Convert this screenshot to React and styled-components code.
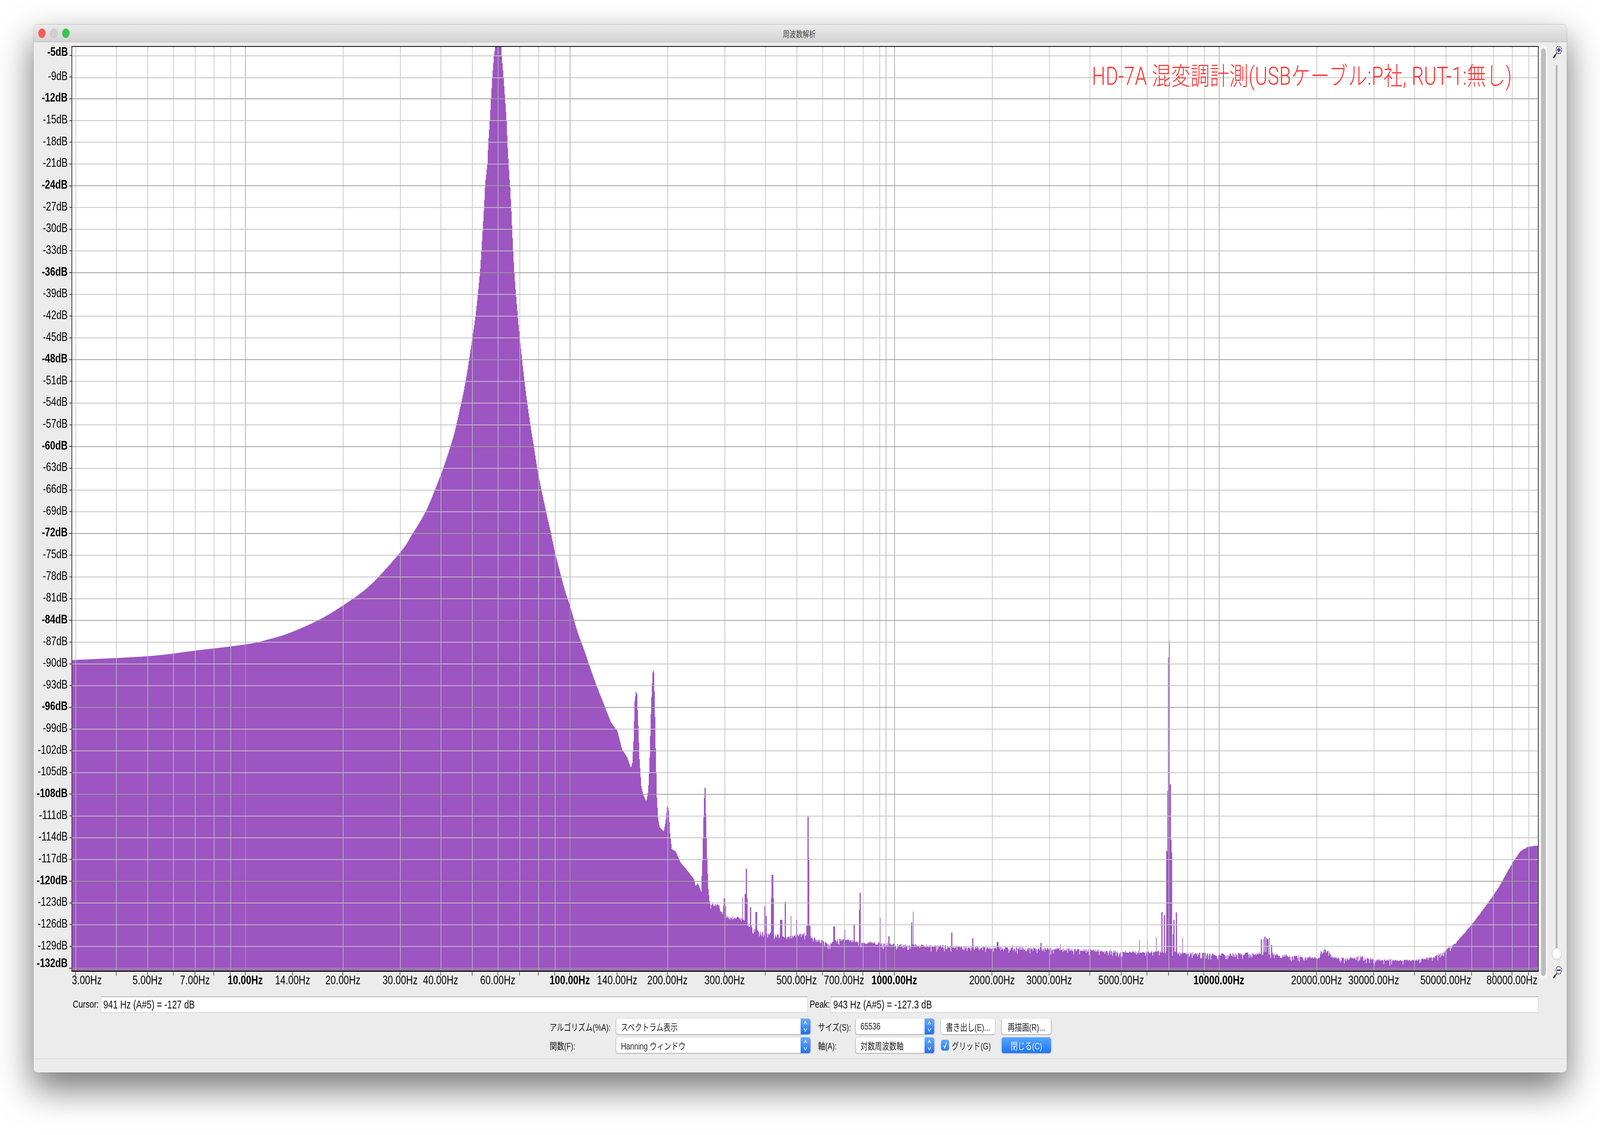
import React from "react";
import styled, { createGlobalStyle } from "styled-components";

const SANS = `"Liberation Sans", "Noto Sans CJK JP", sans-serif`;
const PAGE_WIDTH = 5344;

const GlobalStyle = createGlobalStyle`
  html, body {
    margin: 0;
    background: #fff;
    font-family: ${SANS};
  }
  body {
    height: 2906px;
    overflow: hidden;
  }
`;

// the layout below is in 5344px page pixels. the browser that runs this may hand out a
// narrower window (4096px was seen), so squeeze the width to keep the whole window in frame
const fitX = () => Math.min(1, window.innerWidth / PAGE_WIDTH);

// chart helpers, all values are page pixels
const PLOT_LEFT = 239;
const freqX = (f) => 819 + 1084 * Math.log10(f / 10);
const rowY = (i) => (i === 0 ? 143 : i === 1 ? 199 : 253 + (i - 2) * 55.65);

const dbLabels = ["-5dB"];
for (let db = -9; db >= -132; db -= 3) dbLabels.push(`${db}dB`);

const gridFreqs = [];
[1, 10, 100, 1000, 10000].forEach((decade) => {
  for (let n = decade === 1 ? 3 : 1; n <= 9; n++) gridFreqs.push(n * decade);
});

const freqLabels = [
  3, 5, 7, 10, 14, 20, 30, 40, 60, 100, 140, 200, 300, 500, 700, 1000, 2000, 3000,
  5000, 10000, 20000, 30000, 50000, 80000,
];
const isDecade = (f) => [10, 100, 1000, 10000].includes(f);

// catmull-rom through the measured points, the skirts of the peak are smooth in the reference
const smooth = (pts) => {
  const out = [];
  for (let i = 0; i < pts.length - 1; i++) {
    const p0 = pts[Math.max(i - 1, 0)];
    const p1 = pts[i];
    const p2 = pts[i + 1];
    const p3 = pts[Math.min(i + 2, pts.length - 1)];
    for (let s = 0; s < 8; s++) {
      const t = s / 8;
      const at = (k) =>
        0.5 *
        (2 * p1[k] +
          (p2[k] - p0[k]) * t +
          (2 * p0[k] - 5 * p1[k] + 4 * p2[k] - p3[k]) * t * t +
          (3 * p1[k] - p0[k] - 3 * p2[k] + p3[k]) * t * t * t);
      out.push([at(0), at(1)]);
    }
  }
  out.push(pts[pts.length - 1]);
  return out;
};

const leftSkirt = smooth([
  [240, 1690], [494, 1680], [648, 1666], [818, 1650], [900, 1636], [967, 1620], [1061, 1588],
  [1144, 1550], [1235, 1498], [1335, 1414], [1375, 1368], [1422, 1306], [1469, 1218], [1503, 1142],
  [1523, 1085], [1553, 977], [1576, 863], [1586, 809], [1594, 755], [1601, 698], [1606, 641],
  [1611, 579], [1615, 526], [1618, 480],
]);

const rightSkirt = smooth([
  [1702, 480], [1706, 541], [1710, 610], [1716, 698], [1724, 778], [1734, 863], [1750, 977],
  [1769, 1085], [1781, 1142], [1797, 1218], [1821, 1306], [1838, 1364], [1854, 1421], [1884, 1509],
  [1902, 1551], [1925, 1613], [1950, 1666], [1964, 1698], [1989, 1752], [2014, 1801], [2039, 1850],
]);

const envelope = [
  ...leftSkirt,
  [1620, 460], [1626, 421], [1629, 365], [1634, 309], [1638, 253], [1642, 199], [1648, 143],
  [1652, 119], [1672, 119], [1674, 143], [1680, 199], [1685, 253], [1690, 309], [1693, 365],
  [1697, 421], [1700, 460],
  ...rightSkirt,
  [2060, 1871], [2076, 1919], [2093, 1939],
  [2105, 1966], [2110, 1953], [2114, 1898], [2118, 1795], [2122, 1770], [2126, 1778], [2130, 1858],
  [2134, 1944], [2140, 2013], [2147, 2036], [2157, 2052], [2163, 2025], [2167, 1967], [2173, 1801],
  [2177, 1732], [2179, 1712], [2182, 1721], [2185, 1795], [2188, 1916], [2192, 2042], [2196, 2094],
  [2201, 2117], [2215, 2129], [2221, 2105], [2227, 2058], [2232, 2076], [2236, 2134], [2242, 2174],
  [2255, 2180], [2271, 2208], [2296, 2231], [2317, 2252], [2321, 2269], [2329, 2261], [2340, 2283],
  [2344, 2203], [2347, 2117], [2351, 2019], [2354, 2016], [2357, 2117], [2360, 2197], [2364, 2277],
  [2369, 2315], [2400, 2318], [2405, 2335], [2433, 2349], [2474, 2352], [2499, 2369], [2537, 2389],
  [2586, 2392], [2628, 2402], [2682, 2392], [2719, 2404], [2769, 2418], [2800, 2406], [2877, 2413],
  [3005, 2420], [3133, 2423], [3324, 2427], [3515, 2430], [3750, 2437], [3880, 2438], [3930, 2440],
  [4070, 2444], [4230, 2441], [4320, 2449], [4405, 2452], [4412, 2430], [4423, 2432], [4432, 2435],
  [4445, 2450], [4500, 2455], [4548, 2450], [4592, 2458], [4722, 2459], [4790, 2450], [4827, 2432],
  [4860, 2415], [4912, 2369], [4968, 2312], [5004, 2272], [5048, 2211], [5075, 2180], [5100, 2168],
  [5137, 2165],
];

const spikes = [
  [2418, 2300, 2], [2418, 2320, 5], [2478, 2297, 1], [2487, 2289, 1], [2491, 2224, 2], [2491, 2300, 4],
  [2505, 2323, 2], [2524, 2335, 3], [2553, 2320, 1], [2556, 2345, 3], [2578, 2240, 2], [2578, 2300, 4],
  [2607, 2355, 3], [2621, 2309, 1], [2640, 2345, 1], [2659, 2355, 1], [2697, 2091, 1], [2700, 2197, 1],
  [2698, 2330, 3], [2698, 2370, 6], [2784, 2372, 2], [2820, 2380, 1], [2851, 2368, 1], [2869, 2330, 1],
  [2871, 2286, 1], [2938, 2350, 1], [2967, 2397, 2], [3043, 2362, 1], [3048, 2334, 1], [3177, 2388, 1],
  [3247, 2402, 1], [3330, 2412, 3], [3380, 2420, 1], [3475, 2414, 1], [3540, 2417, 1], [3879, 2335, 1],
  [3887, 2343, 1], [3895, 2179, 1], [3898, 2025, 1], [3901, 1683, 1], [3904, 1641, 1], [3907, 2008, 1],
  [3909, 2151, 1], [3912, 2183, 1], [3917, 2392, 1], [3919, 2355, 1], [3927, 2336, 1], [3948, 2401, 1],
  [3804, 2407, 1], [3830, 2405, 1], [3860, 2400, 1], [4211, 2405, 1], [4218, 2404, 1], [4223, 2398, 1],
  [4229, 2402, 1], [4233, 2405, 1], [4238, 2401, 1], [4245, 2420, 1],
];

const buildSpectrum = () => {
  let seed = 4711;
  const rand = () => {
    seed = (seed * 16807) % 2147483647;
    return seed / 2147483647;
  };
  let seg = 0;
  let d = "M240,2488";
  for (let x = 240; x <= 5138; x += 2) {
    while (seg < envelope.length - 2 && envelope[seg + 1][0] < x) seg++;
    const [x0, y0] = envelope[seg];
    const [x1, y1] = envelope[seg + 1];
    let y = y0 + ((y1 - y0) * (x - x0)) / Math.max(x1 - x0, 0.01);
    if (x > 2370) {
      const amp = x < 4600 ? 4 : x < 4850 ? 2.5 : 1;
      const r = rand();
      y += r < 0.16 && x < 4850 ? 5 + rand() * 9 : (rand() - 0.5) * amp * 2;
    }
    spikes.forEach(([sx, sy, hw]) => {
      if (Math.abs(x - sx) <= hw) y = Math.min(y, sy);
    });
    d += `H${x}V${y.toFixed(1)}`;
  }
  return `${d}H5138V2488Z`;
};
const spectrumPath = buildSpectrum();

const Page = styled.div`
  width: ${PAGE_WIDTH}px;
  height: 2906px;
  box-sizing: border-box;
  padding: 63px 0 0 112px;
  transform-origin: 0 0;
`;

const Window = styled.div`
  width: 5121px;
  height: 2683px;
  display: flex;
  flex-direction: column;
  background: #ececec;
  border-radius: 12px;
  overflow: hidden;
  box-shadow: 0 0 0 1px rgba(0, 0, 0, 0.2), 0 40px 100px 4px rgba(0, 0, 0, 0.52);
`;

const TitleBar = styled.div`
  height: 45px;
  flex: none;
  box-sizing: border-box;
  display: grid;
  grid-template-columns: 1fr auto 1fr;
  align-items: center;
  padding: 0 0 0 16px;
  background: linear-gradient(#ebebeb, #d3d3d3);
  border-bottom: 1px solid #b6b6b6;
`;

const Lights = styled.div`
  display: flex;
  gap: 16px;
`;

const Light = styled.div`
  width: 24px;
  height: 24px;
  box-sizing: border-box;
  border-radius: 50%;
  background: ${(p) => p.$color};
  border: 1px solid ${(p) => p.$edge};
`;

const Title = styled.div`
  font-size: 22px;
  color: #4a4a4a;
  margin-right: 22px;
`;

const MainRow = styled.div`
  height: 2380px;
  flex: none;
  display: grid;
  grid-template-columns: 127px 4900px 26px 65px;
`;

const YAxis = styled.div`
  padding-top: 5.9px;
`;

const YRow = styled.div`
  height: 55.65px;
  display: flex;
  justify-content: flex-end;
  align-items: center;
`;

const YLabel = styled.span`
  font-size: 31px;
  line-height: 1;
  color: #000;
  font-weight: ${(p) => (p.$bold ? 700 : 400)};
  margin-right: ${(p) => (p.$bold ? 5 : 6)}px;
  transform: translateY(${(p) => p.$shift}px);
`;

const YTick = styled.span`
  width: ${(p) => (p.$bold ? 8 : 7)}px;
  height: 2px;
  background: #333;
`;

const Plot = styled.div`
  position: relative;
  margin-top: 10px;
  height: 2370px;
  box-sizing: border-box;
  border: 2px solid #000;
  border-bottom-width: 3px;
  background: #fff;
  overflow: hidden;
`;

const PlotSvg = styled.svg`
  display: block;
  width: 4896px;
  height: 2365px;
`;

const Caption = styled.div`
  position: absolute;
  left: 3406px;
  top: 36px;
  font-family: Roboto, "Noto Sans CJK JP", sans-serif;
  font-weight: 300;
  font-size: 64px;
  letter-spacing: 0.6px;
  line-height: 80px;
  color: #ff3333;
  white-space: nowrap;
`;

const ScrollTrack = styled.div`
  margin: 10px 0 1px 3px;
  width: 26px;
  box-sizing: border-box;
  padding: 6px 5px;
  background: #f6f6f6;
  display: flex;
`;

const ScrollThumb = styled.div`
  flex: 1;
  border-radius: 8px;
  background: #bdbdbd;
`;

const ZoomColumn = styled.div`
  padding: 10px 0 0 3px;
  display: flex;
  flex-direction: column;
  align-items: center;
`;

const ZoomGlyph = styled.svg`
  width: 32px;
  height: 32px;
  flex: none;
  margin-left: 6px;
`;

const SliderTrack = styled.div`
  flex: 1;
  width: 6px;
  margin-top: 16px;
  border-radius: 3px 3px 0 0;
  background: #b6b6b6;
`;

const SliderKnob = styled.div`
  width: 31px;
  height: 30px;
  flex: none;
  margin: -3px 0 17px;
  box-sizing: border-box;
  border-radius: 50%;
  background: #fff;
  border: 1px solid #c4c4c4;
  box-shadow: 0 1px 1px rgba(0, 0, 0, 0.15);
`;

const XAxis = styled.div`
  position: relative;
  flex: none;
  margin-left: 127px;
  width: 4900px;
  height: 63px;
`;

const XTick = styled.span`
  position: absolute;
  top: 1px;
  width: 2px;
  height: 9px;
  background: #444;
`;

const XLabel = styled.span`
  position: absolute;
  top: 6px;
  font-size: 31.5px;
  line-height: 1;
  white-space: nowrap;
  color: #000;
  font-weight: ${(p) => (p.$bold ? 700 : 400)};
  transform: translateX(-50%);
`;

const StatusRow = styled.div`
  flex: none;
  height: 41px;
  padding-left: 131px;
  display: grid;
  grid-template-columns: 94px 2360px 78px 2363px;
  align-items: stretch;
`;

const StatusLabel = styled.label`
  font-size: 26.5px;
  line-height: 41px;
  color: #000;
`;

const StatusField = styled.div`
  box-sizing: border-box;
  padding-left: 7px;
  background: #fff;
  border: 1px solid #c2c2c2;
  border-top: 2px solid #b4b4b4;
  font-size: 29px;
  line-height: 39px;
  color: #111;
`;

const Controls = styled.div`
  flex: none;
  margin-top: 16px;
  padding-left: 1724px;
  display: flex;
  flex-direction: column;
  gap: 8px;
`;

const ControlRow = styled.div`
  height: 40px;
  display: flex;
  align-items: center;
`;

const ControlLabel = styled.span`
  width: ${(p) => p.$width}px;
  margin-left: ${(p) => p.$gap || 0}px;
  flex: none;
  font-size: 24px;
  color: #111;
  white-space: nowrap;
`;

const Select = styled.div`
  width: ${(p) => p.$width}px;
  height: 40px;
  flex: none;
  box-sizing: border-box;
  display: flex;
  align-items: center;
  justify-content: space-between;
  padding-left: 16px;
  background: #fff;
  border-radius: 6px;
  font-size: 24px;
  color: #222;
  box-shadow: 0 1px 3px rgba(0, 0, 0, 0.45), 0 0 0 1px rgba(0, 0, 0, 0.04);
`;

const Stepper = styled.div`
  width: 32px;
  height: 100%;
  flex: none;
  display: flex;
  align-items: center;
  justify-content: center;
  border-radius: 0 6px 6px 0;
  background: linear-gradient(#66adfb, #1f6ff1);
`;

const PushButton = styled.div`
  width: ${(p) => p.$width}px;
  height: 40px;
  margin-left: ${(p) => p.$gap}px;
  flex: none;
  display: flex;
  align-items: center;
  justify-content: center;
  border-radius: 6px;
  font-size: 24px;
  white-space: nowrap;
  color: ${(p) => (p.$primary ? "#e6f0ff" : "#222")};
  background: ${(p) => (p.$primary ? "linear-gradient(#56a5fb, #1d76f4)" : "#fff")};
  box-shadow: 0 1px 3px rgba(0, 0, 0, 0.45);
`;

const CheckField = styled.div`
  width: 180px;
  margin-left: 23px;
  flex: none;
  display: flex;
  align-items: center;
  gap: 9px;
  font-size: 24px;
  color: #222;
  white-space: nowrap;
`;

const CheckBox = styled.div`
  width: 27px;
  height: 28px;
  flex: none;
  display: flex;
  align-items: center;
  justify-content: center;
  border-radius: 6px;
  background: linear-gradient(#62aafb, #2a7df3);
`;

const Footer = styled.div`
  margin-top: auto;
  height: 35px;
  flex: none;
  box-sizing: border-box;
  border-top: 1px solid #c9c9c9;
  box-shadow: inset 0 1px 0 #f8f8f8;
`;

const StepperIcon = () => (
  <svg width="14" height="32" viewBox="0 0 14 32" fill="none" stroke="#fff" strokeWidth="2">
    <path d="M2.5 11 7 3.5 11.5 11M2.5 21 7 28.5 11.5 21" />
  </svg>
);

const ZoomIcon = ({ plus }) => (
  <ZoomGlyph viewBox="0 0 32 32">
    <path d="M14 18 9 23" stroke="#333" strokeWidth="2.5" />
    <path d="M9 23 2 30" stroke="#222" strokeWidth="4.5" />
    <circle cx="20.5" cy="10" r="9.5" fill="#f4f4f4" stroke="#333" strokeWidth="2" strokeDasharray="5 1.5" />
    <path d={plus ? "M14.5 10h12M20.5 4v12" : "M14.5 10h12"} stroke="#3333b8" strokeWidth="4" />
  </ZoomGlyph>
);

const Chart = () => (
  <PlotSvg viewBox="240 120 4896 2365">
    <path d={spectrumPath} fill="#9c55c1" />
    {gridFreqs.map((f) => (
      <line
        key={f}
        x1={freqX(f)}
        x2={freqX(f)}
        y1="120"
        y2="2486"
        stroke={isDecade(f) ? "#9c9c9c" : "#bfbfbf"}
        strokeWidth="2"
      />
    ))}
    <line x1={freqX(941)} x2={freqX(941)} y1="120" y2="2486" stroke="#ababab" strokeWidth="2" />
    {dbLabels.map((label, i) => (
      <line
        key={label}
        x1="240"
        x2="5137"
        y1={rowY(i)}
        y2={rowY(i)}
        stroke={i > 0 && (i - 2) % 4 === 0 ? "#9c9c9c" : "#c2c2c2"}
        strokeWidth="2"
      />
    ))}
    <line x1="240" x2="5137" y1="2484" y2="2484" stroke="#b8b8b8" strokeWidth="1.5" />
  </PlotSvg>
);

const labelShift = (i) => (i === 0 ? -9 : i === dbLabels.length - 1 ? -13 : i === dbLabels.length - 2 ? -2.5 : -3.5);

export default function App() {
  return (
    <>
      <GlobalStyle />
      <Page style={{ transform: `scaleX(${fitX()})` }}>
        <Window>
          <TitleBar>
            <Lights>
              <Light $color="#fc5b57" $edge="#e2453f" />
              <Light $color="#cfcfcf" $edge="#b9b9b9" />
              <Light $color="#34c84a" $edge="#2bad3c" />
            </Lights>
            <Title>周波数解析</Title>
          </TitleBar>

          <MainRow>
            <YAxis>
              {dbLabels.map((label, i) => {
                const bold = i === 0 || (i - 2) % 4 === 0;
                return (
                  <YRow key={label}>
                    <YLabel $bold={bold} $shift={labelShift(i)}>
                      {label}
                    </YLabel>
                    <YTick $bold={bold && i > 0} />
                  </YRow>
                );
              })}
            </YAxis>
            <Plot>
              <Chart />
              <Caption>HD-7A 混変調計測(USBケーブル:P社, RUT-1:無し)</Caption>
            </Plot>
            <ScrollTrack>
              <ScrollThumb />
            </ScrollTrack>
            <ZoomColumn>
              <ZoomIcon plus />
              <SliderTrack />
              <SliderKnob />
              <ZoomIcon />
            </ZoomColumn>
          </MainRow>

          <XAxis>
            {[...gridFreqs, 14, 140].map((f) => (
              <XTick key={f} style={{ left: freqX(f) - PLOT_LEFT - 1 }} />
            ))}
            {freqLabels.map((f) => (
              <XLabel
                key={f}
                $bold={isDecade(f)}
                style={{ left: f === 3 ? 51 : freqX(f) - PLOT_LEFT }}
              >
                {f.toFixed(2)}Hz
              </XLabel>
            ))}
          </XAxis>

          <StatusRow>
            <StatusLabel>Cursor:</StatusLabel>
            <StatusField>941 Hz (A#5) = -127 dB</StatusField>
            <StatusLabel>&nbsp;Peak:</StatusLabel>
            <StatusField>943 Hz (A#5) = -127.3 dB</StatusField>
          </StatusRow>

          <Controls>
            <ControlRow>
              <ControlLabel $width={222}>アルゴリズム(%A):</ControlLabel>
              <Select $width={648}>
                スペクトラム表示
                <Stepper>
                  <StepperIcon />
                </Stepper>
              </Select>
              <ControlLabel $width={126} $gap={26}>
                サイズ(S):
              </ControlLabel>
              <Select $width={262}>
                65536
                <Stepper>
                  <StepperIcon />
                </Stepper>
              </Select>
              <PushButton $width={180} $gap={23}>
                書き出し(E)...
              </PushButton>
              <PushButton $width={164} $gap={23}>
                再描画(R)...
              </PushButton>
            </ControlRow>
            <ControlRow>
              <ControlLabel $width={222}>関数(F):</ControlLabel>
              <Select $width={648}>
                Hanning ウィンドウ
                <Stepper>
                  <StepperIcon />
                </Stepper>
              </Select>
              <ControlLabel $width={126} $gap={26}>
                軸(A):
              </ControlLabel>
              <Select $width={262}>
                対数周波数軸
                <Stepper>
                  <StepperIcon />
                </Stepper>
              </Select>
              <CheckField>
                <CheckBox>
                  <svg width="16" height="20" viewBox="0 0 16 20" fill="none" stroke="#fff" strokeWidth="2.5">
                    <path d="M3 11 6.5 17 12.5 3" />
                  </svg>
                </CheckBox>
                グリッド(G)
              </CheckField>
              <PushButton $width={164} $gap={23} $primary>
                閉じる(C)
              </PushButton>
            </ControlRow>
          </Controls>

          <Footer />
        </Window>
      </Page>
    </>
  );
}
